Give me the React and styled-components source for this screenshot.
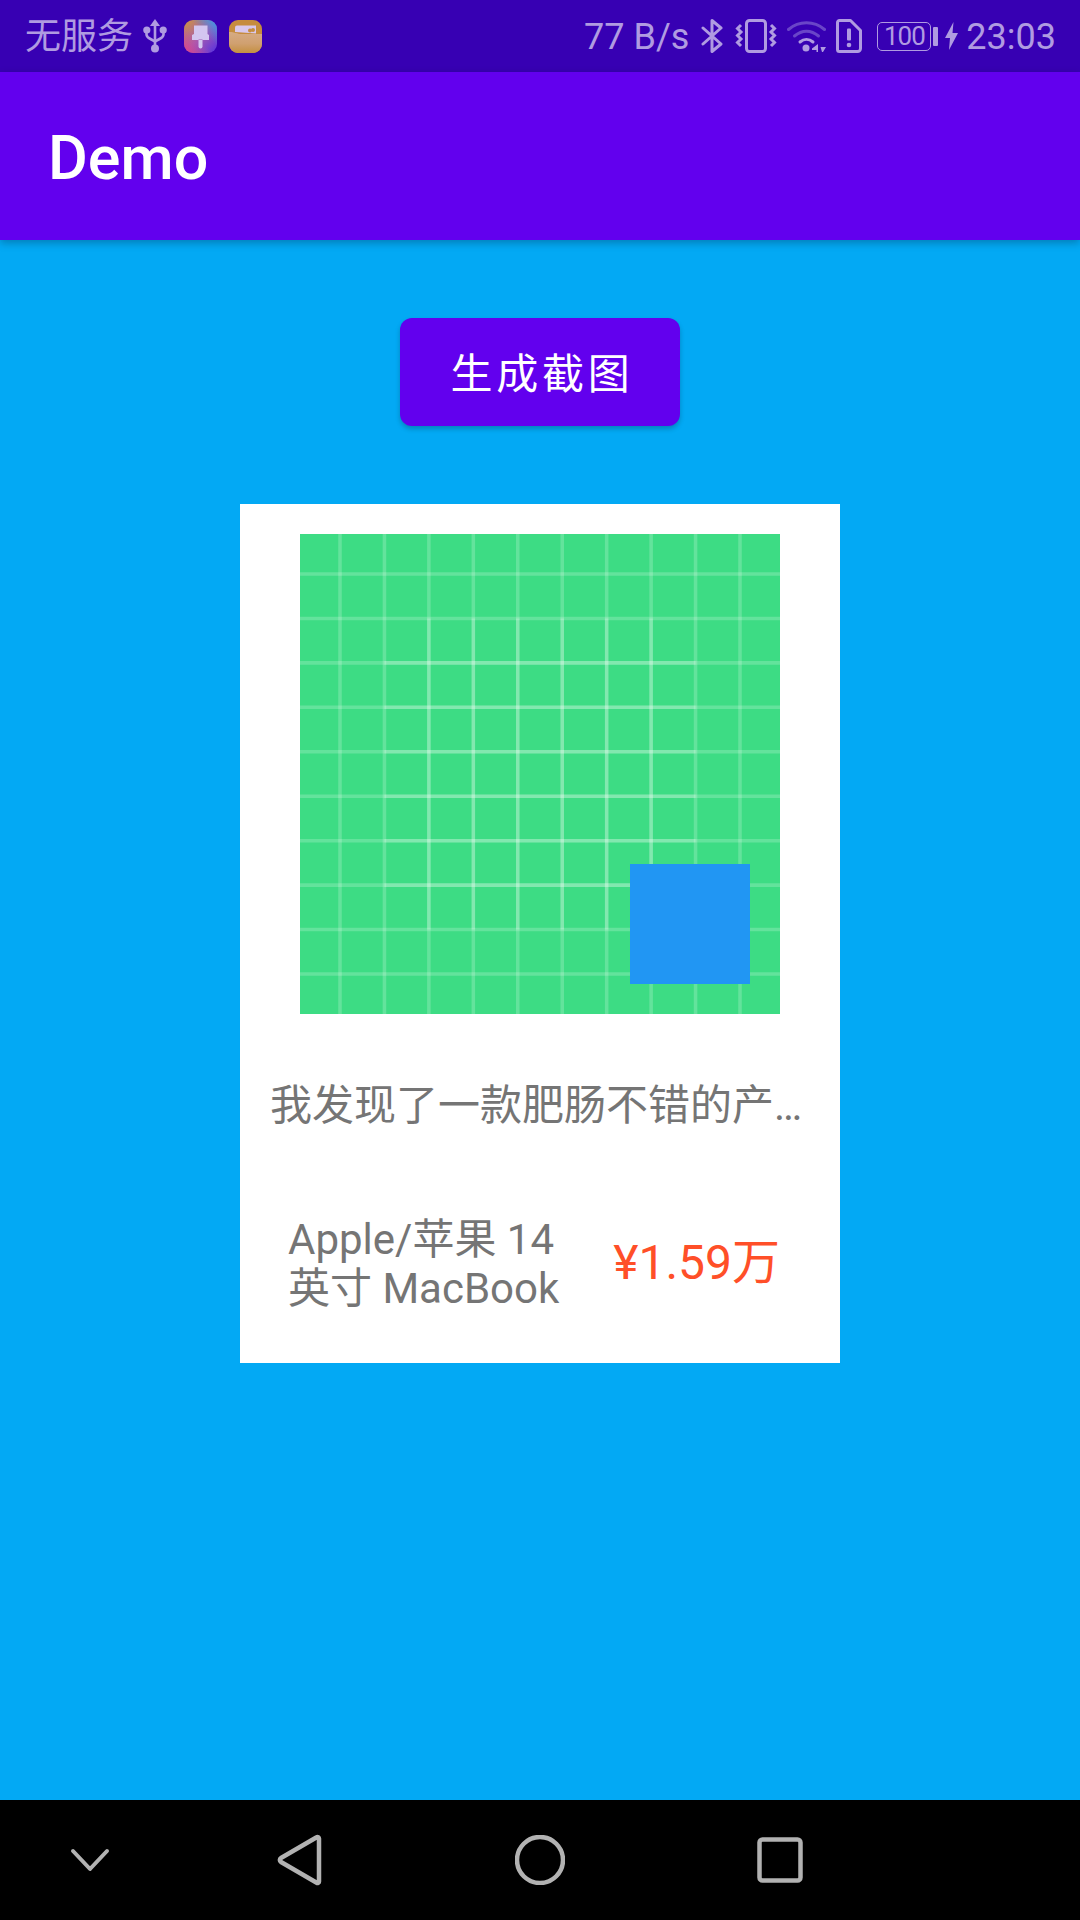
import React from "react";
import styled, { createGlobalStyle } from "styled-components";

const fontStack = `Roboto, "Noto Sans CJK SC", sans-serif`;
const statusColor = "#b09be1";

const GlobalStyle = createGlobalStyle`
    html, body {
        margin: 0;
        padding: 0;
        background: #03a9f4;
        font-family: ${fontStack};
    }
`;

const Page = styled.div`
    width: 1080px;
    height: 1920px;
    display: flex;
    flex-direction: column;
    overflow: hidden;
    background: #03a9f4;
`;

const StatusBar = styled.div`
    height: 72px;
    flex: none;
    display: flex;
    align-items: center;
    justify-content: space-between;
    padding: 0 24px 0 25px;
    box-sizing: border-box;
    background: #3700b3;
    color: ${statusColor};
    font-size: 36px;
`;

const StatusGroup = styled.div`
    display: flex;
    align-items: center;
`;

const StatusText = styled.span`
    line-height: 70px;
    padding-top: 2px;
    white-space: nowrap;
    margin-right: ${(p) => p.$after || 0}px;
`;

const StatusIcon = styled.svg`
    display: block;
    flex: none;
    margin-right: ${(p) => p.$after || 0}px;
`;

const Battery = styled.div`
    width: 54px;
    height: 29px;
    flex: none;
    box-sizing: border-box;
    border: 1.5px solid ${statusColor};
    border-radius: 5px;
    display: flex;
    align-items: center;
    justify-content: center;
    font-size: 26px;
    letter-spacing: -1px;
    line-height: 26px;
`;

const BatteryNub = styled.div`
    width: 5px;
    height: 19px;
    margin: 0 7px 0 2px;
    flex: none;
    border-radius: 1px;
    background: ${statusColor};
`;

const AppBar = styled.header`
    height: 168px;
    flex: none;
    display: flex;
    align-items: center;
    padding: 4px 0 0 48px;
    box-sizing: border-box;
    background: #6200ee;
    box-shadow: 0 3px 8px rgba(0, 0, 0, 0.25);
    position: relative;
    color: #fff;
    font-size: 61px;
    font-weight: 500;
`;

const Content = styled.main`
    flex: 1;
    display: flex;
    flex-direction: column;
    align-items: center;
    padding-top: 78px;
`;

const ShotButton = styled.button`
    width: 280px;
    height: 108px;
    border: 0;
    border-radius: 12px;
    padding: 0 0 3px 4px;
    background: #6200ee;
    color: #fff;
    font-family: ${fontStack};
    font-size: 42px;
    letter-spacing: 3.75px;
    box-shadow: 0 3px 5px rgba(0, 0, 0, 0.22);
`;

const Card = styled.section`
    width: 600px;
    height: 859px;
    margin-top: 78px;
    padding-top: 30px;
    box-sizing: border-box;
    background: #fff;
    display: flex;
    flex-direction: column;
    align-items: center;
`;

const Poster = styled.div`
    width: 480px;
    height: 480px;
    position: relative;
    flex: none;
`;

const PosterGrid = styled.svg`
    display: block;
    width: 480px;
    height: 480px;
`;

const Badge = styled.div`
    position: absolute;
    right: 30px;
    bottom: 30px;
    width: 120px;
    height: 120px;
    background: #2196f3;
`;

const Description = styled.p`
    width: 540px;
    margin: 62px 0 0;
    line-height: 60px;
    font-size: 42px;
    color: #757575;
    white-space: nowrap;
`;

const Product = styled.div`
    width: 540px;
    margin-top: 79px;
    display: flex;
    align-items: center;
    justify-content: space-between;
    padding: 0 30px 0 18px;
    box-sizing: border-box;
`;

const ProductName = styled.div`
    width: 290px;
    font-size: 42px;
    line-height: 49px;
    color: #757575;
`;

const Price = styled.div`
    font-size: 48px;
    line-height: 56px;
    margin-bottom: 3px;
    color: #ff4f28;
    white-space: nowrap;
`;

const NavBar = styled.nav`
    height: 120px;
    flex: none;
    display: grid;
    grid-template-columns: 180px repeat(3, 240px);
    align-items: center;
    justify-items: center;
    background: #000;
`;

const NavIcon = styled.svg`
    display: block;
    fill: none;
    stroke: #b2b2b2;
    stroke-width: ${(p) => p.$stroke || 4.5};
    stroke-linecap: round;
    stroke-linejoin: round;
`;

const gridStops = [9, 19, 29, 39, 49, 59, 69, 79, 89, 99];
const innerStops = [29, 39, 49, 59, 69, 79];

const AndroidGrid = () => (
    <PosterGrid viewBox="0 0 108 108">
        <rect width="108" height="108" fill="#3ddc84" />
        <g stroke="#fff" strokeOpacity="0.2" strokeWidth="0.8" fill="none">
            {gridStops.map((s) => (
                <path key={`v${s}`} d={`M${s},0L${s},108`} />
            ))}
            {gridStops.map((s) => (
                <path key={`h${s}`} d={`M0,${s}L108,${s}`} />
            ))}
            {innerStops.map((s) => (
                <path key={`iv${s}`} d={`M${s},19L${s},89`} />
            ))}
            {innerStops.map((s) => (
                <path key={`ih${s}`} d={`M19,${s}L89,${s}`} />
            ))}
        </g>
    </PosterGrid>
);

const UsbIcon = () => (
    <StatusIcon $after={17} width="24" height="34" viewBox="0 0 24 34" fill={statusColor} stroke={statusColor}>
        <path d="M12 0l5 7H7z" stroke="none" />
        <path d="M12 6v22" strokeWidth="2.6" fill="none" />
        <path d="M3.500 12v3.500c0 2.500 2 3.500 4 4.500l4.500 2.500 4.500-2.500c2-1 4-2 4-4.500V12" strokeWidth="2.6" fill="none" />
        <circle cx="3.800" cy="11" r="3.600" stroke="none" />
        <circle cx="20.200" cy="11" r="3.600" stroke="none" />
        <circle cx="12" cy="29.500" r="4" stroke="none" />
    </StatusIcon>
);

const BrushAppIcon = () => (
    <StatusIcon $after={12} width="33" height="33" viewBox="0 0 33 33">
        <defs>
            <linearGradient id="brushBg" x1="0" y1="0" x2="1" y2="1">
                <stop offset="0" stopColor="#d0963a" />
                <stop offset="0.5" stopColor="#a85cb0" />
                <stop offset="1" stopColor="#5430e0" />
            </linearGradient>
            <linearGradient id="brushGlow" x1="0" y1="1" x2="1" y2="0">
                <stop offset="0" stopColor="#e83f80" />
                <stop offset="0.45" stopColor="#c050a0" stopOpacity="0" />
                <stop offset="0.6" stopColor="#4090e0" stopOpacity="0" />
                <stop offset="1" stopColor="#2ba4ee" />
            </linearGradient>
        </defs>
        <rect width="33" height="33" rx="9" fill="url(#brushBg)" />
        <rect width="33" height="33" rx="9" fill="url(#brushGlow)" />
        <path d="M10 5.500h13.500v8.500l1.500 1v5h-6.500v-.5h-4v.5H8v-5l2-1z" fill="#d3c6f0" />
        <path d="M14.500 20h4v6.500a2 2 0 0 1-4 0z" fill="#d3c6f0" />
    </StatusIcon>
);

const WalletAppIcon = () => (
    <StatusIcon $after={0} width="33" height="33" viewBox="0 0 33 33">
        <defs>
            <linearGradient id="walletBody" x1="0" y1="0" x2="0" y2="1">
                <stop offset="0" stopColor="#d6ab84" />
                <stop offset="0.55" stopColor="#d0a070" />
                <stop offset="1" stopColor="#c49040" />
            </linearGradient>
        </defs>
        <rect width="33" height="33" rx="9" fill="#c68c3e" />
        <path d="M6 11V7.500A2 2 0 0 1 8 5.500h19v8L6 12z" fill="#d9c8ec" />
        <path d="M0 12c6 0 8 2 13 2h20v10a9 9 0 0 1-9 9H9a9 9 0 0 1-9-9z" fill="url(#walletBody)" />
        <circle cx="21" cy="10.500" r="2" fill="#c68c3e" />
        <circle cx="24" cy="10" r="2" fill="#c68c3e" />
    </StatusIcon>
);

const BluetoothIcon = () => (
    <StatusIcon $after={12} width="22" height="34" viewBox="0 0 22 34" fill="none" stroke={statusColor} strokeWidth="3" strokeLinejoin="round" strokeLinecap="round">
        <path d="M2 9l18 16-9 7.500V1.500l9 7.500L2 25" />
    </StatusIcon>
);

const VibrateIcon = () => (
    <StatusIcon $after={10} width="42" height="34" viewBox="0 0 42 34" fill="none" stroke={statusColor} strokeWidth="3">
        <rect x="11.500" y="1.500" width="19" height="31" rx="3" />
        <path d="M6 6l-3.500 3.500L6 13l-3.500 3.500L6 20l-3.500 3.500L6 27" />
        <path d="M36 6l3.500 3.500L36 13l3.500 3.500L36 20l3.500 3.500L36 27" />
    </StatusIcon>
);

const WifiIcon = () => (
    <StatusIcon $after={10} width="39" height="33" viewBox="0 0 39 33" fill="none">
        <path d="M1.500 9.500C12 .5 27 .5 37.500 9.500" stroke="#6a45c8" strokeWidth="3" strokeLinecap="round" />
        <path d="M7.500 16c7.500-6.500 16.500-6.500 24 0" stroke="#6a45c8" strokeWidth="3" strokeLinecap="round" />
        <path d="M13 22c4-3.500 9-3.500 13 0" stroke={statusColor} strokeWidth="3" strokeLinecap="round" />
        <circle cx="19" cy="28" r="3.500" fill={statusColor} />
        <path d="M31 24v8h-1.500v-2H25v-1.500zM33.500 27h5.500l-3 5h-1z" fill={statusColor} />
    </StatusIcon>
);

const SimAlertIcon = () => (
    <StatusIcon $after={15} width="26" height="34" viewBox="0 0 26 34" fill="none">
        <path d="M3.500 1.500h11l10 10v18a3 3 0 0 1-3 3h-18a2 2 0 0 1-2-2v-27a2 2 0 0 1 2-2z" stroke={statusColor} strokeWidth="3" strokeLinejoin="round" />
        <rect x="11" y="9.500" width="4" height="12" rx="1" fill={statusColor} />
        <circle cx="13" cy="26" r="2.300" fill={statusColor} />
    </StatusIcon>
);

const BoltIcon = () => (
    <StatusIcon $after={8} width="13" height="28" viewBox="0 0 13 28" fill={statusColor}>
        <path d="M8.500 0L0 16h5l-1 12 9-17H7.500z" />
    </StatusIcon>
);

const App = () => {
    return (
        <Page>
            <GlobalStyle />
            <StatusBar>
                <StatusGroup>
                    <StatusText $after={10}>无服务</StatusText>
                    <UsbIcon />
                    <BrushAppIcon />
                    <WalletAppIcon />
                </StatusGroup>
                <StatusGroup>
                    <StatusText $after={12}>77 B/s</StatusText>
                    <BluetoothIcon />
                    <VibrateIcon />
                    <WifiIcon />
                    <SimAlertIcon />
                    <Battery>100</Battery>
                    <BatteryNub />
                    <BoltIcon />
                    <StatusText>23:03</StatusText>
                </StatusGroup>
            </StatusBar>
            <AppBar>Demo</AppBar>
            <Content>
                <ShotButton>生成截图</ShotButton>
                <Card>
                    <Poster>
                        <AndroidGrid />
                        <Badge />
                    </Poster>
                    <Description>我发现了一款肥肠不错的产…</Description>
                    <Product>
                        <ProductName>Apple/苹果 14 英寸 MacBook</ProductName>
                        <Price>¥1.59万</Price>
                    </Product>
                </Card>
            </Content>
            <NavBar>
                <NavIcon $stroke={4} width="42" height="25" viewBox="0 0 42 25">
                    <path d="M4 3l17 18L38 3" />
                </NavIcon>
                <NavIcon width="46" height="52" viewBox="0 0 46 52">
                    <path d="M42 4.500v43a1.500 1.500 0 0 1-2.300 1.300L4 28a2.300 2.300 0 0 1 0-4L39.700 3.200A1.500 1.500 0 0 1 42 4.500z" />
                </NavIcon>
                <NavIcon width="50" height="50" viewBox="0 0 50 50">
                    <circle cx="25" cy="25" r="23" />
                </NavIcon>
                <NavIcon width="46" height="46" viewBox="0 0 46 46">
                    <rect x="2.500" y="2.500" width="41" height="41" rx="3" />
                </NavIcon>
            </NavBar>
        </Page>
    );
};

export default App;
